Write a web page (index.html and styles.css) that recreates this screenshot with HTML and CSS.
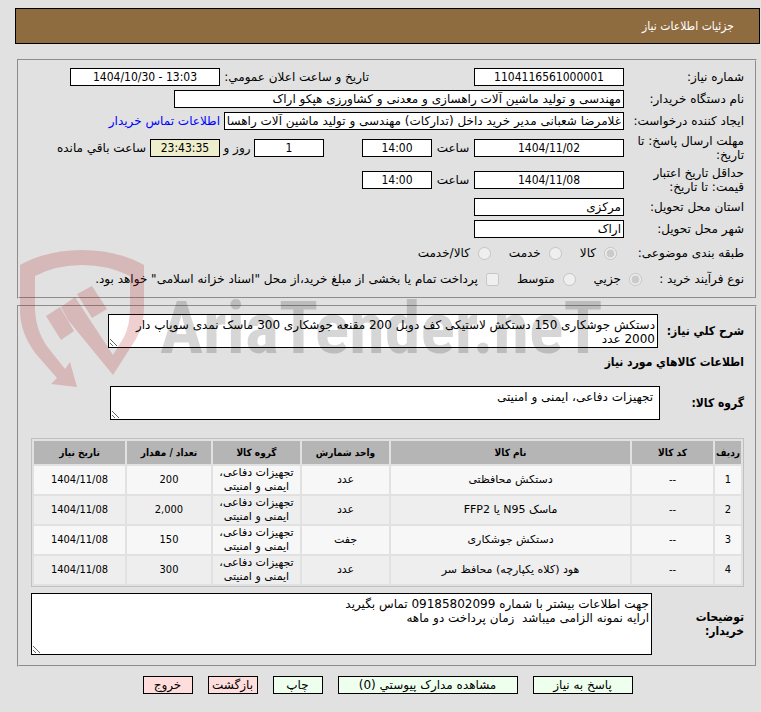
FILE: index.html
```html
<!DOCTYPE html>
<html lang="fa" dir="rtl">
<head>
    <meta charset="UTF-8">
    <meta name="viewport" content="width=device-width, initial-scale=1.0">
    <title>جزئیات اطلاعات نیاز</title>
    <link rel="stylesheet" href="styles.css">
</head>
<body>

    <h1 class="page-title">جزئیات اطلاعات نیاز</h1>

    <!-- Need details -->
    <fieldset class="panel details">
        <div class="row">
            <label class="caption" for="need-no">شماره نیاز:</label>
            <input class="field center" id="need-no" type="text" value="1104116561000001" readonly>
            <label class="announce" for="announce-date">تاریخ و ساعت اعلان عمومي:</label>
            <input class="field center" id="announce-date" type="text" dir="ltr" value="1404/10/30 - 13:03" readonly>
        </div>
        <div class="row">
            <label class="caption" for="buyer">نام دستگاه خریدار:</label>
            <input class="field wide" id="buyer" type="text" value="مهندسی و تولید ماشین آلات راهسازی و معدنی و کشاورزی هپکو اراک" readonly>
        </div>
        <div class="row">
            <label class="caption" for="creator">ایجاد کننده درخواست:</label>
            <input class="field long" id="creator" type="text" value="غلامرضا شعبانی مدیر خرید داخل (تدارکات) مهندسی و تولید ماشین آلات راهسازی و معدنی و کشاورزی هپکو اراک" readonly>
            <a class="contact" href="#">اطلاعات تماس خریدار</a>
        </div>
        <div class="row tall">
            <label class="caption" for="reply-date">مهلت ارسال پاسخ: تا تاریخ:</label>
            <input class="field center" id="reply-date" type="text" value="1404/11/02" readonly>
            <label class="unit" for="reply-time">ساعت</label>
            <input class="field short center" id="reply-time" type="text" value="14:00" readonly>
            <input class="field short center days" id="days" type="text" value="1" aria-label="روز" readonly>
            <label class="unit narrow" for="days">روز و</label>
            <input class="field short center remain" id="remain" type="text" value="23:43:35" readonly>
            <label class="unit after" for="remain">ساعت باقي مانده</label>
        </div>
        <div class="row tall">
            <label class="caption" for="price-date">حداقل تاریخ اعتبار قیمت: تا تاریخ:</label>
            <input class="field center" id="price-date" type="text" value="1404/11/08" readonly>
            <label class="unit" for="price-time">ساعت</label>
            <input class="field short center" id="price-time" type="text" value="14:00" readonly>
        </div>
        <div class="row">
            <label class="caption" for="province">استان محل تحویل:</label>
            <input class="field" id="province" type="text" value="مرکزی" readonly>
        </div>
        <div class="row">
            <label class="caption" for="city">شهر محل تحویل:</label>
            <input class="field" id="city" type="text" value="اراک" readonly>
        </div>
        <div class="row options">
            <span class="caption category">طبقه بندی موضوعی:</span>
            <label class="choice"><input type="radio" name="category" checked disabled>کالا</label>
            <label class="choice"><input type="radio" name="category" disabled>خدمت</label>
            <label class="choice"><input type="radio" name="category" disabled>کالا/خدمت</label>
        </div>
        <div class="row options">
            <span class="caption process">نوع فرآیند خرید :</span>
            <label class="choice"><input type="radio" name="process" checked disabled>جزیي</label>
            <label class="choice"><input type="radio" name="process" disabled>متوسط</label>
            <label class="choice"><input type="checkbox" disabled>پرداخت تمام یا بخشی از مبلغ خرید،از محل "اسناد خزانه اسلامی" خواهد بود.</label>
        </div>
    </fieldset>

    <!-- Goods -->
    <fieldset class="panel goods">
        <div class="area-row">
            <label class="area-caption" for="summary">شرح کلي نیاز:</label>
            <textarea class="area" id="summary" readonly>دستکش جوشکاری 150 دستکش لاستیکی کف دوبل 200 مقنعه جوشکاری 300 ماسک نمدی سوپاپ دار 2000 عدد</textarea>
        </div>
        <h2 class="sub-title">اطلاعات کالاهاي مورد نیاز</h2>
        <div class="area-row">
            <label class="area-caption group-caption" for="group">گروه کالا:</label>
            <textarea class="area" id="group" readonly> تجهیزات دفاعی، ایمنی و امنیتی</textarea>
        </div>

        <table class="items">
            <colgroup>
                <col class="col-row">
                <col class="col-code">
                <col>
                <col class="col-unit">
                <col class="col-unit">
                <col class="col-count">
                <col class="col-date">
            </colgroup>
            <thead>
                <tr>
                    <th>ردیف</th>
                    <th>کد کالا</th>
                    <th>نام کالا</th>
                    <th>واحد شمارش</th>
                    <th>گروه کالا</th>
                    <th>تعداد / مقدار</th>
                    <th>تاریخ نیاز</th>
                </tr>
            </thead>
            <tbody>
                <tr>
                    <td class="num">1</td>
                    <td class="num">--</td>
                    <td>دستکش محافظتی</td>
                    <td>عدد</td>
                    <td>تجهیزات دفاعی، ایمنی و امنیتی</td>
                    <td class="num">200</td>
                    <td class="num">1404/11/08</td>
                </tr>
                <tr>
                    <td class="num">2</td>
                    <td class="num">--</td>
                    <td>ماسک N95 یا FFP2</td>
                    <td>عدد</td>
                    <td>تجهیزات دفاعی، ایمنی و امنیتی</td>
                    <td class="num">2,000</td>
                    <td class="num">1404/11/08</td>
                </tr>
                <tr>
                    <td class="num">3</td>
                    <td class="num">--</td>
                    <td>دستکش جوشکاری</td>
                    <td>جفت</td>
                    <td>تجهیزات دفاعی، ایمنی و امنیتی</td>
                    <td class="num">150</td>
                    <td class="num">1404/11/08</td>
                </tr>
                <tr>
                    <td class="num">4</td>
                    <td class="num">--</td>
                    <td>هود (کلاه یکپارچه) محافظ سر</td>
                    <td>عدد</td>
                    <td>تجهیزات دفاعی، ایمنی و امنیتی</td>
                    <td class="num">300</td>
                    <td class="num">1404/11/08</td>
                </tr>
            </tbody>
        </table>

        <div class="area-row">
            <label class="area-caption notes-caption" for="notes">توضیحات خریدار:</label>
            <textarea class="area notes" id="notes" readonly>جهت اطلاعات بیشتر با شماره 09185802099 تماس بگیرید
ارایه نمونه الزامی میباشد  زمان پرداخت دو ماهه</textarea>
        </div>
    </fieldset>

    <div class="buttons">
        <button class="btn medium" type="button">پاسخ به نیاز</button>
        <button class="btn large" type="button">مشاهده مدارک پیوستي (0)</button>
        <button class="btn" type="button">چاپ</button>
        <button class="btn leave" type="button">بازگشت</button>
        <button class="btn leave" type="button">خروج</button>
    </div>

    <!-- Watermark over the form -->
    <div class="watermark" dir="ltr">
        <svg class="shield" width="126" height="138" viewBox="20 250 126 138" aria-hidden="true">
            <path d="M20 265Q47 250 82 250Q117 250 144 265V308Q144 325 136 339L113 375L68 320L61 307L75 297L90 320L113 355L124 337Q130 325 130 308V276Q108 265 82 265Q56 265 35 276V310Q36 330 46 345L65 369L70 362L77 387L51 384L57 378L36 354Q20 333 20 310Z"/>
            <path d="M77 294L92 286L107 309L92 318Z"/>
            <path d="M46 316L60 307L74 331L61 340Z"/>
        </svg>
        <span class="brand">AriaTender.neT</span>
    </div>

</body>
</html>
```

FILE: styles.css
```css
* {
    box-sizing: border-box;
}

body {
    position: relative;
    margin: 8px 1px 0 15px;
    background-color: #e1e1e1;
    color: #000;
    font-family: "DejaVu Sans", sans-serif;
    font-size: 12px;
    line-height: 14px;
}

input,
textarea,
button {
    font-family: inherit;
    font-size: 12px;
    line-height: 14px;
    color: #000;
}

/* Headings and numbers use the condensed face */
.page-title,
.sub-title,
.area-caption,
.field.center,
.items th,
.items .num {
    font-family: "DejaVu Sans Condensed", "DejaVu Sans", sans-serif;
}

/* Brown title bar */
.page-title {
    display: flex;
    align-items: center;
    height: 36px;
    margin: 0 0 15px;
    padding: 0 25px;
    border: 1px solid #000;
    background-color: #8f6c3f;
    color: #fff;
    font-size: 12px;
    font-weight: normal;
}

.panel {
    min-width: 0;
    margin: 0 3px 6px 2px;
    border: 2px groove #e1e1e1;
}

.details {
    padding: 5px 11px 5px 12px;
}

.goods {
    padding: 7px 11px 10px 12px;
}

/* Form rows */
.row {
    display: flex;
    align-items: center;
    height: 22px;
}

.row.tall {
    height: 32px;
}

.row.options {
    height: 26px;
}

.caption {
    flex: none;
    width: 120px;
    padding-left: 4px;
}

.field {
    width: 150px;
    height: 18px;
    padding: 1px 2px;
    border: 1px solid #000;
    border-radius: 0;
    background-color: #fff;
}

.field.wide {
    width: 450px;
}

.field.long {
    width: 400px;
}

.field.short {
    width: 70px;
}

.field.center {
    text-align: center;
}

.field.days {
    margin-right: 38px;
}

.field.remain {
    background-color: #eeeecc;
}

.announce {
    width: 149px;
    margin-right: 105px;
    white-space: nowrap;
}

.contact {
    margin-right: 4px;
    color: #0000ff;
    text-decoration: none;
}

.unit {
    width: 42px;
    text-align: center;
    white-space: nowrap;
}

.unit.narrow {
    width: 34px;
}

.unit.after {
    width: auto;
    margin-right: 4px;
}

/* Radio and checkbox choices */
.caption.category {
    width: 127px;
}

.caption.process {
    width: 102px;
    padding-left: 0;
}

.choice {
    display: flex;
    align-items: center;
    margin-left: 18px;
    white-space: nowrap;
}

.choice input {
    width: 13px;
    height: 13px;
    margin: 0 0 0 8px;
}

/* Text areas */
.area-row {
    display: flex;
    align-items: center;
}

.area-caption {
    flex: none;
    width: 86px;
    font-weight: bold;
}

.group-caption {
    width: 84px;
}

.notes-caption {
    width: 92px;
    padding-left: 20px;
}

.area {
    flex: 0 1 550px;
    height: 34px;
    padding: 3px 2px 0;
    border: 1px solid #000;
    border-radius: 0;
    background-color: #fff;
    overflow: hidden;
    resize: both;
}

.area.notes {
    flex: 1;
    height: 62px;
}

.sub-title {
    margin: 7px 0 17px;
    font-size: 12px;
    font-weight: bold;
}

/* Goods table */
.items {
    width: 100%;
    margin: 18px 0 6px;
    border: 1px solid #c0c0c0;
    border-spacing: 2px;
    table-layout: fixed;
    font-size: 11px;
    text-align: center;
}

.items th,
.items td {
    height: 28px;
    padding: 0;
}

.items th {
    height: 23px;
    background-color: #b5b5b5;
    font-size: 10px;
    white-space: nowrap;
}

.items td {
    background-color: #f7f7f7;
}

.items tr:nth-child(even) td {
    background-color: #eeeeee;
}

.col-row {
    width: 26px;
}

.col-code {
    width: 81px;
}

.col-unit {
    width: 87px;
}

.col-count {
    width: 84px;
}

.col-date {
    width: 91px;
}

/* Action buttons */
.buttons {
    display: flex;
    justify-content: center;
    gap: 15px;
    margin-top: 9px;
}

.btn {
    width: 50px;
    height: 18px;
    padding: 0;
    border: 1px solid #000;
    background-color: #eeffee;
    white-space: nowrap;
}

.btn.medium {
    width: 100px;
}

.btn.large {
    width: 180px;
}

.btn.leave {
    background-color: #ffdddd;
}

/* Watermark */
.watermark {
    position: absolute;
    top: 242px;
    left: 5px;
    display: flex;
    align-items: flex-end;
    gap: 14px;
    pointer-events: none;
}

.shield {
    fill: rgba(175, 20, 20, 0.2);
}

.brand {
    padding-bottom: 22px;
    color: rgba(0, 0, 0, 0.16);
    font-family: "Liberation Sans Narrow", "Roboto Condensed", "Liberation Sans", sans-serif;
    font-size: 72px;
    font-weight: bold;
    line-height: 74px;
}
```
